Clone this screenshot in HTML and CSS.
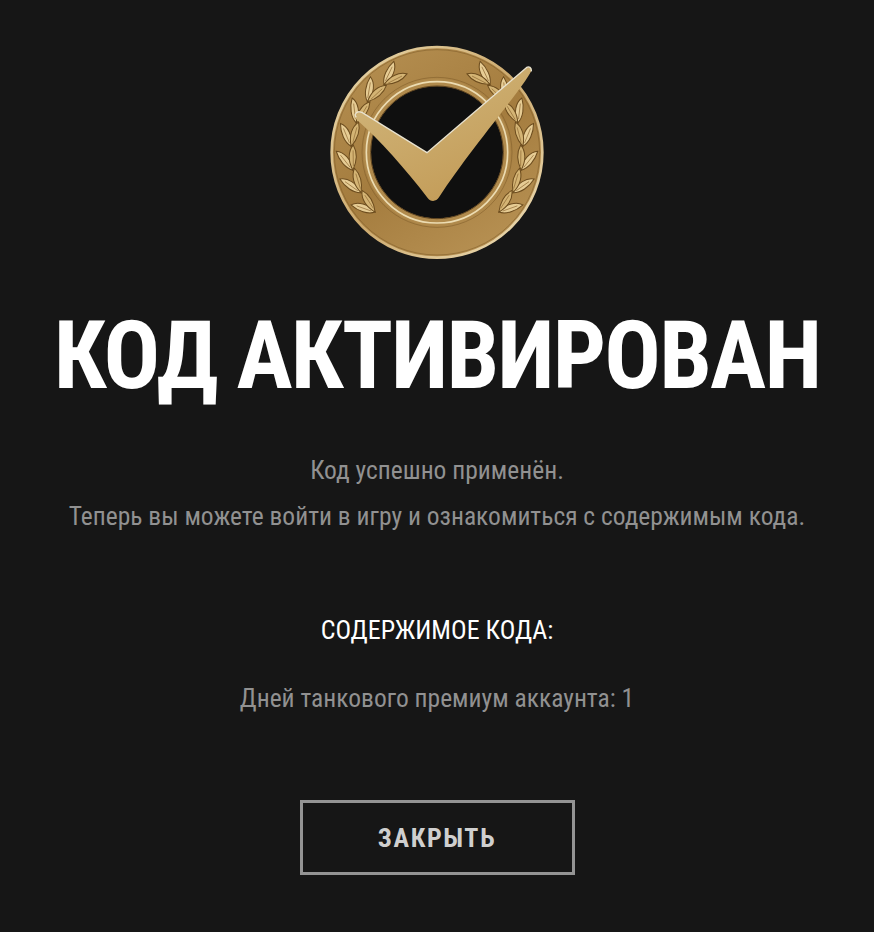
FILE: index.html
```html
<!DOCTYPE html>
<html lang="ru">
<head>
    <meta charset="UTF-8">
    <title>Код активирован</title>
    <link rel="stylesheet" href="styles.css">
</head>
<body>
<div class="container">
    <!-- Medal -->
    <svg class="medal" viewBox="7 0 750 720" aria-hidden="true">
        <defs>
            <linearGradient id="gold" x1="0.2" y1="0" x2="0.8" y2="1">
                <stop offset="0" stop-color="#b48e50"/>
                <stop offset="0.5" stop-color="#a47c3e"/>
                <stop offset="1" stop-color="#b89254"/>
            </linearGradient>
            <linearGradient id="rim" x1="0" y1="0" x2="1" y2="1">
                <stop offset="0" stop-color="#eadaae"/>
                <stop offset="0.5" stop-color="#cdaa6e"/>
                <stop offset="1" stop-color="#f0e2bc"/>
            </linearGradient>
            <linearGradient id="tick" x1="0" y1="0" x2="0.6" y2="1">
                <stop offset="0" stop-color="#d2b87e"/>
                <stop offset="1" stop-color="#c39c58"/>
            </linearGradient>
            <!-- pair of laurel leaves, sitting on the band at 12 o'clock -->
            <g id="sprig">
                <path d="M382 109C392 88 420 74 448 72C442 94 414 112 382 109Z" fill="#e6cc94" stroke="#6c4c1e" stroke-width="3"/>
                <path d="M382 109C402 124 430 134 456 126C440 106 412 100 382 109Z" fill="#d4b474" stroke="#6c4c1e" stroke-width="3"/>
                <path d="M392 103L434 82M394 113L440 122" stroke="#8f6a34" stroke-width="2" fill="none"/>
            </g>
            <g id="laurel">
                <use href="#sprig" transform="rotate(-134 382 367)"/>
                <use href="#sprig" transform="rotate(-118 382 367)"/>
                <use href="#sprig" transform="rotate(-102 382 367)"/>
                <use href="#sprig" transform="rotate(-86 382 367)"/>
                <use href="#sprig" transform="rotate(-70 382 367)"/>
                <use href="#sprig" transform="rotate(-54 382 367)"/>
                <use href="#sprig" transform="rotate(-38 382 367)"/>
            </g>
        </defs>
        <circle cx="382" cy="367" r="316" fill="url(#gold)" stroke="url(#rim)" stroke-width="8"/>
        <circle cx="382" cy="367" r="308" fill="none" stroke="#7a5826" stroke-width="3" opacity="0.5"/>
        <use href="#laurel"/>
        <use href="#laurel" transform="translate(764 0) scale(-1 1)"/>
        <circle cx="382" cy="367" r="225" fill="none" stroke="#7a5826" stroke-width="3" opacity="0.5"/>
        <circle cx="382" cy="367" r="209" fill="#0f0f0f" stroke="#b08a4c" stroke-width="22"/>
        <circle cx="382" cy="367" r="212" fill="none" stroke="#ecdcb2" stroke-width="5"/>
        <circle cx="382" cy="367" r="199" fill="none" stroke="#5e4420" stroke-width="3"/>
        <path d="M138 250C142 244 150 244 158 248L352 368L650 113C658 108 666 112 665 122C640 175 480 360 388 502C380 516 362 516 354 504C290 420 210 330 140 268C134 262 134 256 138 250Z" fill="url(#tick)"/>
        <path d="M140 262C134 256 136 248 148 245L158 248L352 368L650 113C658 108 666 112 665 124" fill="none" stroke="#e9e3d0" stroke-width="4"/>
    </svg>

    <h1>КОД АКТИВИРОВАН</h1>

    <p class="message">Код успешно применён.</p>
    <p class="message">Теперь вы можете войти в игру и ознакомиться с содержимым кода.</p>

    <h2>СОДЕРЖИМОЕ КОДА:</h2>
    <p class="bonus">Дней танкового премиум аккаунта: 1</p>

    <button class="close-btn">ЗАКРЫТЬ</button>
</div>
</body>
</html>
```

FILE: styles.css
```css
body {
    margin: 0;
    background-color: #161616;
    font-family: "Roboto", "Liberation Sans", sans-serif;
    font-stretch: condensed;
    color: #919191;
    text-align: center;
}

.container {
    display: flex;
    flex-direction: column;
    align-items: center;
    height: 932px;
    overflow: hidden;
}

.medal {
    width: 250px;
    height: 240px;
    margin-top: 30px;
}

h1 {
    margin: 30px 0 0;
    font-size: 94px;
    line-height: 112px;
    font-weight: 700;
    letter-spacing: -1.8px;
    white-space: nowrap;
    color: #fff;
}

.message {
    margin: 0;
    font-size: 25.5px;
    line-height: 46px;
    white-space: nowrap;
}

h1 + .message {
    margin-top: 35px;
}

h2 {
    margin: 68px 0 0;
    font-size: 26px;
    line-height: 46px;
    font-weight: 400;
    color: #fff;
}

.bonus {
    margin: 22px 0 0;
    font-size: 25.5px;
    line-height: 46px;
}

.close-btn {
    width: 275px;
    height: 75px;
    margin-top: 79px;
    background: transparent;
    border: 3px solid #949494;
    color: #cfcfcf;
    font-family: inherit;
    font-stretch: condensed;
    font-size: 26px;
    font-weight: 700;
    letter-spacing: 1.6px;
}
```
